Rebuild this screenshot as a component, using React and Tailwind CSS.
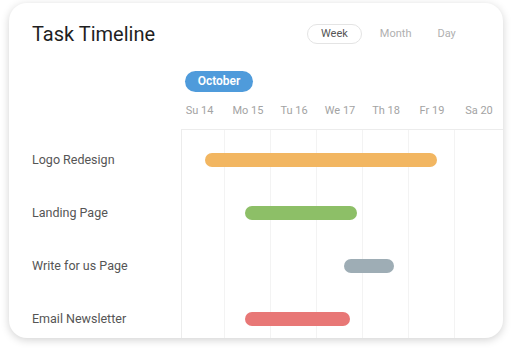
import React from "react";

const days = ["Su 14", "Mo 15", "Tu 16", "We 17", "Th 18", "Fr 19", "Sa 20"];
const tasks = [
  { name: "Logo Redesign", start: 23, width: 232, color: "bg-[#f2b661]" },
  { name: "Landing Page", start: 63, width: 112, color: "bg-[#8dbf67]" },
  { name: "Write for us Page", start: 162, width: 50, color: "bg-[#9eadb5]" },
  { name: "Email Newsletter", start: 63, width: 105, color: "bg-[#e87776]" },
];

export default function App() {
  return (
    <div className="w-[512px] h-[352px] bg-white pt-[3px] pl-[9px] font-['Roboto',sans-serif]">
      <div className="w-[494px] h-[335px] rounded-[18px] bg-white shadow-[0_2px_8px_rgba(0,0,0,0.18)] overflow-hidden flex flex-col">
        {/* header */}
        <div className="h-[126px] flex shrink-0">
          <div className="w-[172px] pl-[23px] pt-[17px]">
            <h1 className="text-[20px] leading-[28px] text-[#1f1f1f]">Task Timeline</h1>
          </div>
          <div className="w-[322px] flex flex-col">
            <div className="flex pl-[126px] pt-[21px]">
              <div className="h-[20px] px-[13px] rounded-full border border-[#e4e4e4] text-[11px] leading-[18px] text-[#555]">Week</div>
              <div className="ml-[4px] h-[20px] px-[13px] rounded-full border border-transparent text-[11px] leading-[18px] text-[#b0b0b0]">Month</div>
              <div className="ml-[-2px] h-[20px] px-[13px] rounded-full border border-transparent text-[11px] leading-[18px] text-[#b0b0b0]">Day</div>
            </div>
            <div className="pl-[4px] pt-[27px]">
              <div className="w-[68px] h-[21px] rounded-full bg-[#4f9bdb] text-white text-[12px] font-semibold leading-[21px] text-center">October</div>
            </div>
            <div className="grid grid-cols-[44px_46px_46px_46px_46px_46px_48px] pt-[11px]">
              {days.map((d, i) => (
                <div key={d} className={`text-center text-[11px] leading-[16px] text-[#a3a3a3] ${i === 0 ? "pr-[7px]" : ""}`}>{d}</div>
              ))}
            </div>
          </div>
        </div>
        {/* body */}
        <div className="flex flex-1 min-h-0">
          <div className="w-[172px] pl-[23px] pt-[5px] shrink-0">
            {tasks.map((t) => (
              <div key={t.name} className="h-[53px] flex items-center text-[12.5px] text-[#555]">{t.name}</div>
            ))}
          </div>
          <div className="relative w-[322px] border-l border-t border-[#ececec]">
            <div className="absolute inset-0 grid grid-cols-[43px_46px_46px_46px_46px_46px_48px]">
              {days.map((d, i) => (
                <div key={d} className={i < 6 ? "border-r border-[#f3f3f3]" : ""} />
              ))}
            </div>
            <div className="relative pt-[3px]">
              {tasks.map((t) => (
                <div key={t.name} className="h-[53px] flex items-center">
                  <div
                    className={`h-[14px] rounded-full ${t.color}`}
                    style={{ marginLeft: t.start, width: t.width }}
                  />
                </div>
              ))}
            </div>
          </div>
        </div>
      </div>
    </div>
  );
}
